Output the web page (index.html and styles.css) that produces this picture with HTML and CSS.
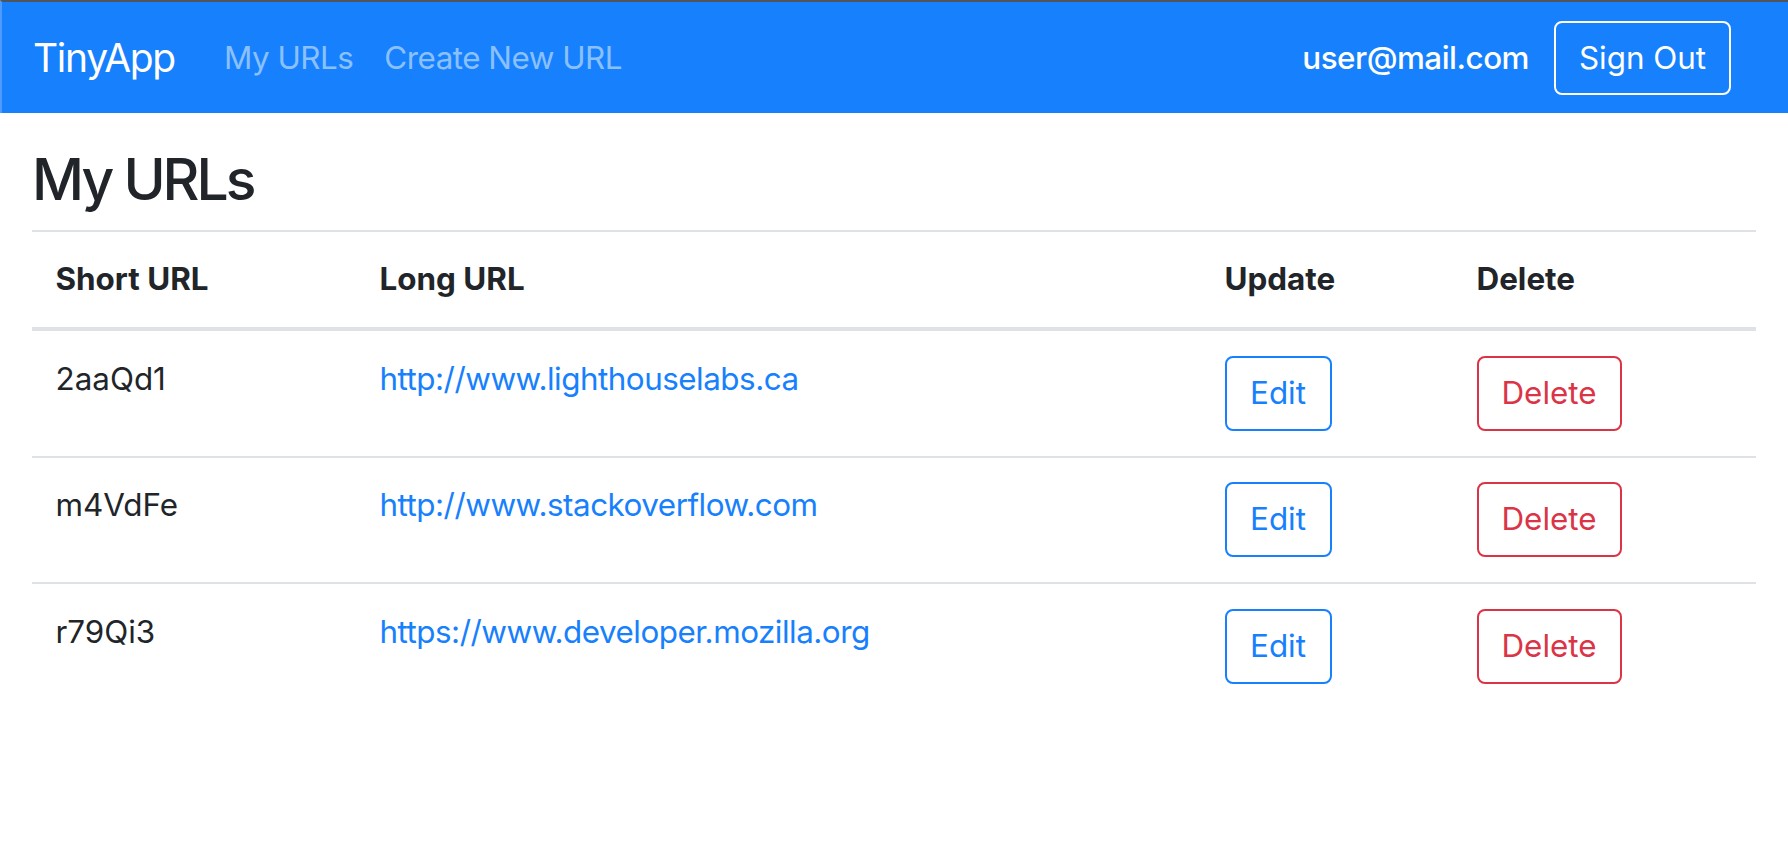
FILE: index.html
```html
<!DOCTYPE html>
<html lang="en">
<head>
<meta charset="utf-8">
<title>TinyApp</title>
<link rel="stylesheet" href="styles.css">
</head>
<body>
<nav class="navbar">
  <div class="nav-left">
    <a class="brand" href="#">TinyApp</a>
    <a class="nav-link" href="#">My URLs</a>
    <a class="nav-link" href="#">Create New URL</a>
  </div>
  <div class="nav-right">
    <span class="user">user@mail.com</span>
    <button class="btn btn-light-outline">Sign Out</button>
  </div>
</nav>
<main class="container">
  <h1 class="title">My URLs</h1>
  <table class="table">
    <colgroup>
      <col class="c1"><col class="c2"><col class="c3"><col class="c4">
    </colgroup>
    <thead>
      <tr><th>Short URL</th><th>Long URL</th><th>Update</th><th>Delete</th></tr>
    </thead>
    <tbody>
      <tr>
        <td>2aaQd1</td>
        <td><a class="link" href="#">http://www.lighthouselabs.ca</a></td>
        <td><button class="btn btn-primary-outline">Edit</button></td>
        <td><button class="btn btn-danger-outline">Delete</button></td>
      </tr>
      <tr>
        <td>m4VdFe</td>
        <td><a class="link" href="#">http://www.stackoverflow.com</a></td>
        <td><button class="btn btn-primary-outline">Edit</button></td>
        <td><button class="btn btn-danger-outline">Delete</button></td>
      </tr>
      <tr>
        <td>r79Qi3</td>
        <td><a class="link" href="#">https://www.developer.mozilla.org</a></td>
        <td><button class="btn btn-primary-outline">Edit</button></td>
        <td><button class="btn btn-danger-outline">Delete</button></td>
      </tr>
    </tbody>
  </table>
</main>
</body>
</html>
```
FILE: styles.css
```css
* { box-sizing: border-box; }
html, body { margin: 0; padding: 0; }
body {
  font-family: Inter, Roboto, "Liberation Sans", sans-serif;
  font-size: 31.4px;
  line-height: 47px;
  color: #212529;
  background: #fff;
}
.navbar {
  height: 113px;
  border-top: 2px solid #50555b;
  border-left: 2px solid #4f9bfd;
  background: #1780fd;
  display: flex;
  align-items: center;
  justify-content: space-between;
  padding: 1px 57px 0 31px;
}
.nav-left, .nav-right { display: flex; align-items: center; }
.brand {
  color: #fff;
  text-decoration: none;
  font-size: 39px;
  line-height: 58px;
  letter-spacing: -1.3px;
  margin-right: 49px;
}
.nav-link {
  color: #8bc0fe;
  text-decoration: none;
  letter-spacing: -0.5px;
  margin-right: 31px;
}
.user {
  color: #fff;
  font-weight: 500;
  letter-spacing: -0.5px;
  margin-right: 25px;
}
.btn {
  font-family: inherit;
  font-size: 31.4px;
  line-height: 47px;
  background: transparent;
  border: 2px solid;
  border-radius: 8px;
  padding: 0;
  height: 75px;
  text-align: center;
  white-space: nowrap;
  cursor: pointer;
}
.btn-light-outline { color: #fff; border-color: #fff; width: 177px; height: 74px; }
.btn-primary-outline { color: #1780fd; border-color: #1780fd; width: 107px; }
.btn-danger-outline { color: #da3446; border-color: #da3446; width: 145px; }
.container { padding: 0 32px; }
.title {
  font-size: 57px;
  font-weight: 500;
  line-height: 74px;
  letter-spacing: -3px;
  margin: 30px 0 13px;
}
.table { width: 100%; border-collapse: collapse; table-layout: fixed; }
.c1 { width: 324px; }
.c2 { width: 845px; }
.c3 { width: 252px; }
.c4 { width: 303px; }
.table th, .table td {
  text-align: left;
  vertical-align: top;
  padding: 24px 23.5px;
  border-top: 2px solid #dee2e6;
}
.table td { padding-top: 24.5px; padding-bottom: 25px; }
.table th { font-weight: 700; border-bottom: 4px solid #dee2e6; }
.table tbody tr:first-child td { border-top: none; }
.cell-text { display: inline-block; }
.link { color: #1780fd; text-decoration: none; letter-spacing: -0.5px; }
```
